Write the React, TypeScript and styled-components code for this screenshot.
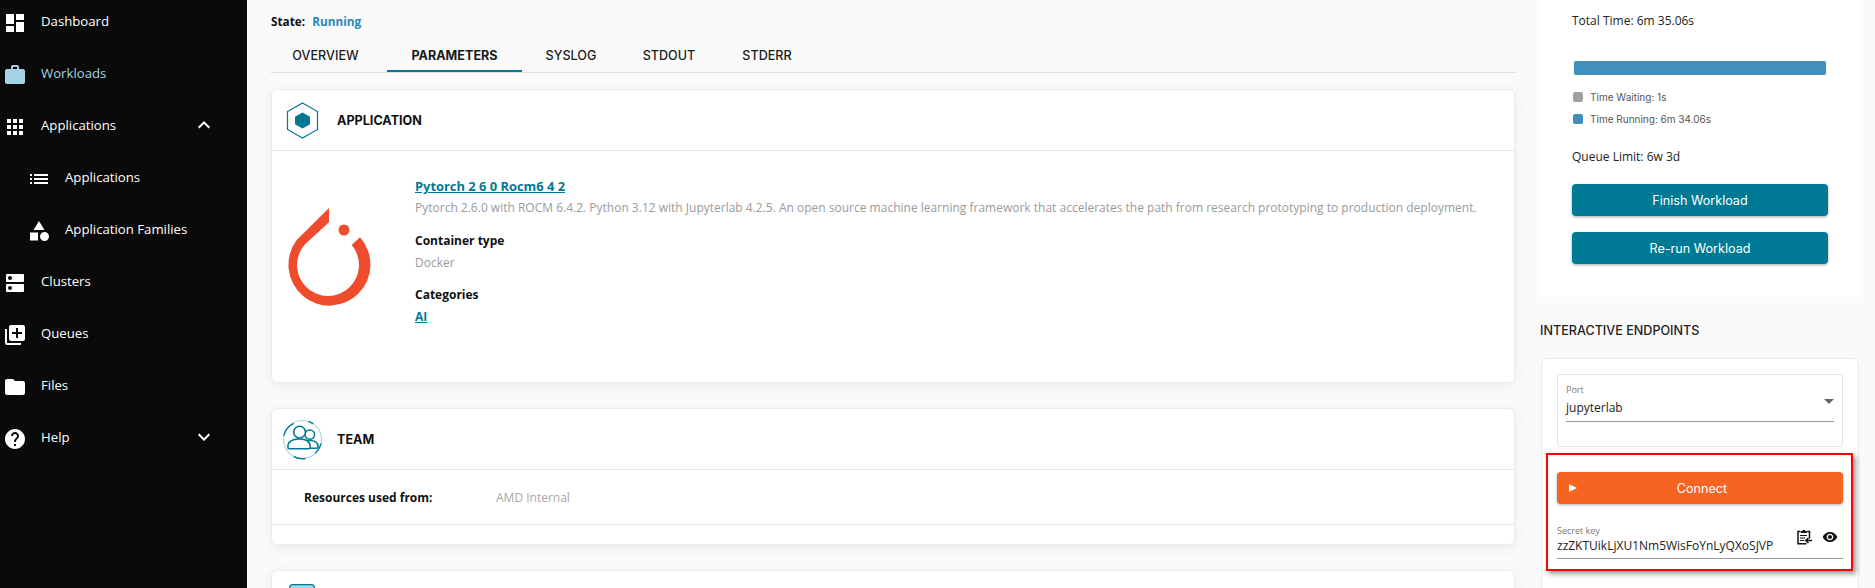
import React from "react";
import styled, { createGlobalStyle } from "styled-components";

const Global = createGlobalStyle`
  html, body { margin: 0; padding: 0; width: 1875px; height: 588px; overflow: hidden; background: #fafafa; }
  * { box-sizing: border-box; }
`;

const body = `"Open Sans", "Noto Sans", sans-serif`;
const head = `Inter, "Liberation Sans", sans-serif`;

const Page = styled.div`
  display: grid;
  grid-template-columns: 247px 1268px 345px;
  height: 588px;
  overflow: hidden;
  background: #fafafa;
  font-family: ${body};
  color: #111;
`;

/* Sidebar */
const Sidebar = styled.nav`
  background: #0a0a0a;
  height: 588px;
  overflow: hidden;
`;
const NavList = styled.div`
  margin-top: -5px;
`;
const NavRow = styled.div<{ $sub?: boolean; $active?: boolean }>`
  height: 52px;
  display: flex;
  align-items: center;
  padding-left: ${(p) => (p.$sub ? 27 : 3)}px;
  gap: 14px;
  color: ${(p) => (p.$active ? "#a5d3e3" : "#fff")};
  font-size: 13.2px;
  svg { fill: currentColor; flex: none; }
`;
const NavIcon = styled.svg`
  margin-top: 4px;
`;
const NavLabel = styled.span`
  flex: 1;
`;
const Chevron = styled.svg`
  margin-right: 31px;
`;

/* Left column */
const Content = styled.main`
  display: flex;
  flex-direction: column;
  min-width: 0;
  margin-left: 24px;
`;
const StateLine = styled.div`
  height: 41px;
  flex: none;
  display: flex;
  align-items: center;
  gap: 7px;
  font-size: 11.8px;
  font-weight: 700;
`;
const StateValue = styled.span`
  color: #2a86bd;
`;
const Tabs = styled.div`
  display: flex;
  flex: none;
  height: 32px;
  border-bottom: 1px solid #ddd;
`;
const Tab = styled.div<{ $active?: boolean; $width: number; $after?: number }>`
  width: ${(p) => p.$width}px;
  margin-right: ${(p) => p.$after ?? 0}px;
  height: 31px;
  display: flex;
  align-items: center;
  justify-content: center;
  font-family: ${head};
  font-size: 12.6px;
  font-weight: ${(p) => (p.$active ? 700 : 500)};
  color: #1a1a1a;
  border-bottom: 2px solid ${(p) => (p.$active ? "#007a94" : "transparent")};
`;
const Card = styled.section<{ $height: number }>`
  height: ${(p) => p.$height}px;
  flex: none;
  background: #fff;
  border: 1px solid #ebebeb;
  border-radius: 6px;
  box-shadow: 0 3px 12px rgba(60, 80, 100, 0.08);
  margin-top: 16px;
  & + & { margin-top: 25px; }
`;
const CardHead = styled.header<{ $inset: number }>`
  height: 61px;
  padding-left: ${(p) => p.$inset}px;
  display: flex;
  align-items: center;
  border-bottom: 1px solid #e6e6e6;
`;
const CardTitle = styled.h2<{ $gap: number }>`
  margin: 0 0 0 ${(p) => p.$gap}px;
  font-family: ${head};
  font-size: 12.6px;
  font-weight: 700;
  color: #111;
`;
const AppBody = styled.div`
  display: flex;
  padding: 25px 0 0 13px;
`;
const Logo = styled.svg`
  flex: none;
  margin: 29px 40px 0 0;
`;
const AppText = styled.div`
  display: flex;
  flex-direction: column;
  font-size: 12px;
`;
const AppLink = styled.a<{ $large?: boolean }>`
  color: #007a94;
  font-weight: 700;
  font-size: ${(p) => (p.$large ? 12.9 : 12)}px;
  text-decoration: underline;
  line-height: ${(p) => (p.$large ? 21 : 22)}px;
`;
const Muted = styled.div`
  color: #9b9b9b;
  line-height: 22px;
`;
const Strong = styled.div`
  color: #111;
  font-weight: 700;
  line-height: 22px;
  margin-top: 10.5px;
`;
const TeamRow = styled.div`
  height: 55px;
  display: flex;
  align-items: center;
  padding-left: 32px;
  border-bottom: 1px solid #e6e6e6;
  font-size: 12px;
`;
const TeamLabel = styled.div`
  width: 192px;
  font-weight: 700;
`;
const TeamValue = styled.div`
  color: #a8a8a8;
`;
const PeekIcon = styled.svg`
  margin: 13px 0 0 17px;
  display: block;
`;

/* Right column */
const Aside = styled.aside`
  display: flex;
  flex-direction: column;
  margin-left: 25px;
  width: 320px;
`;
const TimePanel = styled.div`
  height: 297px;
  background: #fff;
  padding: 11px 32px 0;
`;
const TimeText = styled.div`
  font-size: 12px;
  line-height: 20px;
  color: #222;
`;
const Bar = styled.div`
  height: 14px;
  width: 252px;
  margin: 30px 0 0 2px;
  background: #438fbb;
  border-radius: 2px;
`;
const LegendList = styled.div`
  margin: 14px 0 20px 1px;
  display: flex;
  flex-direction: column;
  gap: 6px;
`;
const LegendItem = styled.div`
  display: flex;
  align-items: center;
  gap: 7px;
  height: 16px;
  font-family: ${head};
  font-size: 10px;
  color: #555;
`;
const Swatch = styled.span<{ $color: string }>`
  width: 10px;
  height: 10px;
  border-radius: 2px;
  background: ${(p) => p.$color};
`;
const TealButton = styled.button`
  display: block;
  width: 256px;
  height: 32px;
  margin-top: 16px;
  border: 0;
  border-radius: 4px;
  background: #007a94;
  color: #fff;
  font-family: ${head};
  font-size: 12.6px;
  font-weight: 400;
  box-shadow: 0 1px 3px rgba(0, 0, 0, 0.35);
  &:first-of-type { margin-top: 17px; }
`;
const SectionTitle = styled.h3`
  margin: 0;
  height: 61px;
  display: flex;
  align-items: center;
  padding-top: 5px;
  font-family: ${head};
  font-size: 12.6px;
  font-weight: 500;
  color: #222;
`;
const EndpointCard = styled.div`
  margin-left: 1px;
  width: 318px;
  height: 260px;
  background: #fff;
  border: 1px solid #eaeaea;
  border-radius: 6px;
  padding: 15px;
`;
const PortBox = styled.div`
  position: relative;
  height: 73px;
  border: 1px solid #e6e6e6;
  border-radius: 3px;
  padding: 8px 8px 0;
`;
const FieldLabel = styled.div`
  font-size: 9px;
  line-height: 14px;
  color: #777;
`;
const PortValue = styled.div`
  height: 25px;
  line-height: 22px;
  font-size: 12px;
  color: #222;
  border-bottom: 1px solid #999;
`;
const Caret = styled.span`
  position: absolute;
  right: 8px;
  top: 24px;
  width: 0;
  height: 0;
  border-left: 5px solid transparent;
  border-right: 5px solid transparent;
  border-top: 5px solid #666;
`;
const Highlight = styled.div`
  margin: 6px -10px 0 -11px;
  height: 118px;
  border: 2px solid #f00;
  box-shadow: 3px 3px 5px rgba(0, 0, 0, 0.4);
  padding: 17px 0 0 9px;
`;
const ConnectButton = styled.button`
  position: relative;
  display: block;
  width: 286px;
  height: 32px;
  padding: 0 0 0 4px;
  border: 0;
  border-radius: 4px;
  background: #f56421;
  color: #fff;
  font-family: ${head};
  font-size: 12.6px;
  font-weight: 400;
  box-shadow: 0 1px 3px rgba(0, 0, 0, 0.3);
`;
const PlayIcon = styled.span`
  position: absolute;
  left: 12px;
  top: 12px;
  width: 0;
  height: 0;
  border-top: 4.5px solid transparent;
  border-bottom: 4.5px solid transparent;
  border-left: 8px solid #fff;
`;
const SecretField = styled.div`
  position: relative;
  width: 286px;
  height: 35px;
  margin-top: 20px;
  border-bottom: 1px solid #999;
`;
const SecretValue = styled.div`
  font-size: 12px;
  line-height: 16px;
  color: #222;
  white-space: nowrap;
`;
const FieldIcons = styled.div`
  position: absolute;
  right: 5px;
  top: 5px;
  display: flex;
  align-items: center;
  gap: 10px;
  svg { display: block; }
`;

const P = {
  dashboard: "M3 13h8V3H3v10zm0 8h8v-6H3v6zm10 0h8V11h-8v10zm0-18v6h8V3h-8z",
  work: "M20 6h-4V4c0-1.11-.89-2-2-2h-4c-1.11 0-2 .89-2 2v2H4c-1.11 0-1.99.89-1.99 2L2 19c0 1.11.89 2 2 2h16c1.11 0 2-.89 2-2V8c0-1.11-.89-2-2-2zm-6 0h-4V4h4v2z",
  apps: "M4 8h4V4H4v4zm6 12h4v-4h-4v4zm-6 0h4v-4H4v4zm0-6h4v-4H4v4zm6 0h4v-4h-4v4zm6-10v4h4V4h-4zm-6 4h4V4h-4v4zm6 6h4v-4h-4v4zm0 6h4v-4h-4v4z",
  list: "M3 13h2v-2H3v2zm0 4h2v-2H3v2zm0-8h2V7H3v2zm4 4h14v-2H7v2zm0 4h14v-2H7v2zM7 7v2h14V7H7z",
  category: "M12 2l-5.5 9h11zM17.5 13a4.5 4.5 0 1 0 0 9a4.5 4.5 0 1 0 0-9zM3 13.5h8v8H3z",
  dns: "M20 13H4c-.55 0-1 .45-1 1v6c0 .55.45 1 1 1h16c.55 0 1-.45 1-1v-6c0-.55-.45-1-1-1zM7 19c-1.1 0-2-.9-2-2s.9-2 2-2 2 .9 2 2-.9 2-2 2zM20 3H4c-.55 0-1 .45-1 1v6c0 .55.45 1 1 1h16c.55 0 1-.45 1-1V4c0-.55-.45-1-1-1zM7 9c-1.1 0-2-.9-2-2s.9-2 2-2 2 .9 2 2-.9 2-2 2z",
  queue: "M4 6H2v14c0 1.1.9 2 2 2h14v-2H4V6zm16-4H8c-1.1 0-2 .9-2 2v12c0 1.1.9 2 2 2h12c1.1 0 2-.9 2-2V4c0-1.1-.9-2-2-2zm-1 9h-4v4h-2v-4H9V9h4V5h2v4h4v2z",
  folder: "M10 4H4c-1.1 0-1.99.9-1.99 2L2 18c0 1.1.9 2 2 2h16c1.1 0 2-.9 2-2V8c0-1.1-.9-2-2-2h-8l-2-2z",
  help: "M12 2C6.48 2 2 6.48 2 12s4.48 10 10 10 10-4.48 10-10S17.52 2 12 2zm1 17h-2v-2h2v2zm2.07-7.75l-.9.92C13.45 12.9 13 13.5 13 15h-2v-.5c0-1.1.45-2.1 1.17-2.83l1.24-1.26c.37-.36.59-.86.59-1.41 0-1.1-.9-2-2-2s-2 .9-2 2H8c0-2.21 1.79-4 4-4s4 1.79 4 4c0 .88-.36 1.68-.93 2.25z",
  less: "M12 8l-6 6 1.41 1.41L12 10.83l4.59 4.58L18 14z",
  more: "M16.59 8.59L12 13.17 7.41 8.59 6 10l6 6 6-6z",
  eye: "M12 4.5C7 4.5 2.73 7.61 1 12c1.73 4.39 6 7.5 11 7.5s9.27-3.11 11-7.5c-1.73-4.39-6-7.5-11-7.5zM12 17c-2.76 0-5-2.24-5-5s2.24-5 5-5 5 2.24 5 5-2.24 5-5 5zm0-8c-1.66 0-3 1.34-3 3s1.34 3 3 3 3-1.34 3-3-1.34-3-3-3z",
};

const nav = [
  { label: "Dashboard", d: P.dashboard },
  { label: "Workloads", d: P.work, active: true },
  { label: "Applications", d: P.apps, chevron: P.less },
  { label: "Applications", d: P.list, sub: true },
  { label: "Application Families", d: P.category, sub: true },
  { label: "Clusters", d: P.dns },
  { label: "Queues", d: P.queue },
  { label: "Files", d: P.folder },
  { label: "Help", d: P.help, chevron: P.more },
];

const HexIcon = () => (
  <svg width="33" height="37" viewBox="0 0 33 37">
    <path d="M16.5 1L31.5 9.5v18L16.5 36 1.5 27.5v-18z" fill="none" stroke="#007a94" strokeWidth="1.2" />
    <path d="M16.5 10.5L24 14.7v7.6l-7.5 4.2L9 22.3v-7.6z" fill="#007a94" />
  </svg>
);

const TeamIcon = () => (
  <svg width="41" height="41" viewBox="0 0 42 42" fill="none">
    <circle cx="21" cy="21" r="19.5" stroke="#a9d6e2" strokeWidth="1.2" />
    <path d="M12 4.5A19.5 19.5 0 0 0 1.8 17M40 25a19.5 19.5 0 0 1-6 10M12 38.5a19.5 19.5 0 0 0 12 2M27 2.5a19.5 19.5 0 0 1 5 2.5" stroke="#007a94" strokeWidth="1.4" />
    <g stroke="#007a94" strokeWidth="1.6" fill="#fff">
      <circle cx="28.5" cy="16" r="4.8" />
      <path d="M21 30c0-6 3-8 7.5-8s8.5 2 8.5 6.5c0 1.5-1 1.5-2 1.5z" />
      <circle cx="18" cy="13.5" r="6" />
      <path d="M7.5 30.5c-1.5 0-1.5-1-1.5-2C6 23 10.5 20.5 18 20.5S29 24 29 29c0 1-.5 1.5-1.5 1.5z" />
    </g>
  </svg>
);

const Clipboard = () => (
  <svg width="15" height="16" viewBox="0 0 15 16" fill="none" stroke="#111">
    <path d="M9.5 14.7H1V2.6h2.4M10.2 2.6h2.3v7" strokeWidth="1.5" />
    <path d="M3.8 4V2h1.8a1.3 1.3 0 0 1 2.6 0h1.8v2z" fill="#111" stroke="none" />
    <path d="M3 6.5h7M3 9h5M3 11.5h4" strokeWidth="1.2" />
    <path d="M15 11.5H9.5M11.5 9l-2.8 2.5 2.8 2.5" strokeWidth="1.6" />
  </svg>
);

const tabs = [
  { label: "OVERVIEW", width: 109, after: 7 },
  { label: "PARAMETERS", width: 135, active: true },
  { label: "SYSLOG", width: 98 },
  { label: "STDOUT", width: 98 },
  { label: "STDERR", width: 98 },
];

export default function App() {
  return (
    <Page>
      <Global />
      <Sidebar>
        <NavList>
          {nav.map((n, i) => (
            <NavRow key={i} $sub={n.sub} $active={n.active}>
              <NavIcon width="24" height="24" viewBox="0 0 24 24" fillRule="evenodd">
                <path d={n.d} />
              </NavIcon>
              <NavLabel>{n.label}</NavLabel>
              {n.chevron && (
                <Chevron width="24" height="24" viewBox="0 0 24 24">
                  <path d={n.chevron} />
                </Chevron>
              )}
            </NavRow>
          ))}
        </NavList>
      </Sidebar>

      <Content>
        <StateLine>
          State: <StateValue>Running</StateValue>
        </StateLine>
        <Tabs>
          {tabs.map((t) => (
            <Tab key={t.label} $width={t.width} $after={t.after} $active={t.active}>
              {t.label}
            </Tab>
          ))}
        </Tabs>
        <Card $height={294}>
          <CardHead $inset={14}>
            <HexIcon />
            <CardTitle $gap={18}>APPLICATION</CardTitle>
          </CardHead>
          <AppBody>
            <Logo width="90" height="105" viewBox="0 0 90 105">
              <path
                d="M44 3L11.7 35A41 41 0 1 0 75 32.3L66.7 40A31 31 0 1 1 19.3 40L44 17.3Z"
                fill="#ee4c2c"
              />
              <circle cx="59" cy="25" r="5.5" fill="#ee4c2c" />
            </Logo>
            <AppText>
              <AppLink $large>Pytorch 2 6 0 Rocm6 4 2</AppLink>
              <Muted>
                Pytorch 2.6.0 with ROCM 6.4.2. Python 3.12 with Jupyterlab 4.2.5. An open source machine learning
                framework that accelerates the path from research prototyping to production deployment.
              </Muted>
              <Strong>Container type</Strong>
              <Muted>Docker</Muted>
              <Strong>Categories</Strong>
              <AppLink>AI</AppLink>
            </AppText>
          </AppBody>
        </Card>
        <Card $height={137}>
          <CardHead $inset={10}>
            <TeamIcon />
            <CardTitle $gap={14}>TEAM</CardTitle>
          </CardHead>
          <TeamRow>
            <TeamLabel>Resources used from:</TeamLabel>
            <TeamValue>AMD Internal</TeamValue>
          </TeamRow>
        </Card>
        <Card $height={100}>
          <PeekIcon width="26" height="20" viewBox="0 0 26 20">
            <rect x="0.6" y="0.6" width="24.8" height="30" rx="3" fill="#a9d6e2" stroke="#007a94" strokeWidth="1.2" />
          </PeekIcon>
        </Card>
      </Content>

      <Aside>
        <TimePanel>
          <TimeText>Total Time: 6m 35.06s</TimeText>
          <Bar />
          <LegendList>
            <LegendItem>
              <Swatch $color="#a0a0a0" />
              Time Waiting: 1s
            </LegendItem>
            <LegendItem>
              <Swatch $color="#438fbb" />
              Time Running: 6m 34.06s
            </LegendItem>
          </LegendList>
          <TimeText>Queue Limit: 6w 3d</TimeText>
          <TealButton>Finish Workload</TealButton>
          <TealButton>Re-run Workload</TealButton>
        </TimePanel>
        <SectionTitle>INTERACTIVE ENDPOINTS</SectionTitle>
        <EndpointCard>
          <PortBox>
            <FieldLabel>Port</FieldLabel>
            <PortValue>jupyterlab</PortValue>
            <Caret />
          </PortBox>
          <Highlight>
            <ConnectButton>
              <PlayIcon />
              Connect
            </ConnectButton>
            <SecretField>
              <FieldLabel>Secret key</FieldLabel>
              <SecretValue>zzZKTUikLjXU1Nm5WisFoYnLyQXoSJVP</SecretValue>
              <FieldIcons>
                <Clipboard />
                <svg width="16" height="16" viewBox="0 0 24 24" fillRule="evenodd">
                  <path d={P.eye} fill="#111" />
                </svg>
              </FieldIcons>
            </SecretField>
          </Highlight>
        </EndpointCard>
      </Aside>
    </Page>
  );
}
